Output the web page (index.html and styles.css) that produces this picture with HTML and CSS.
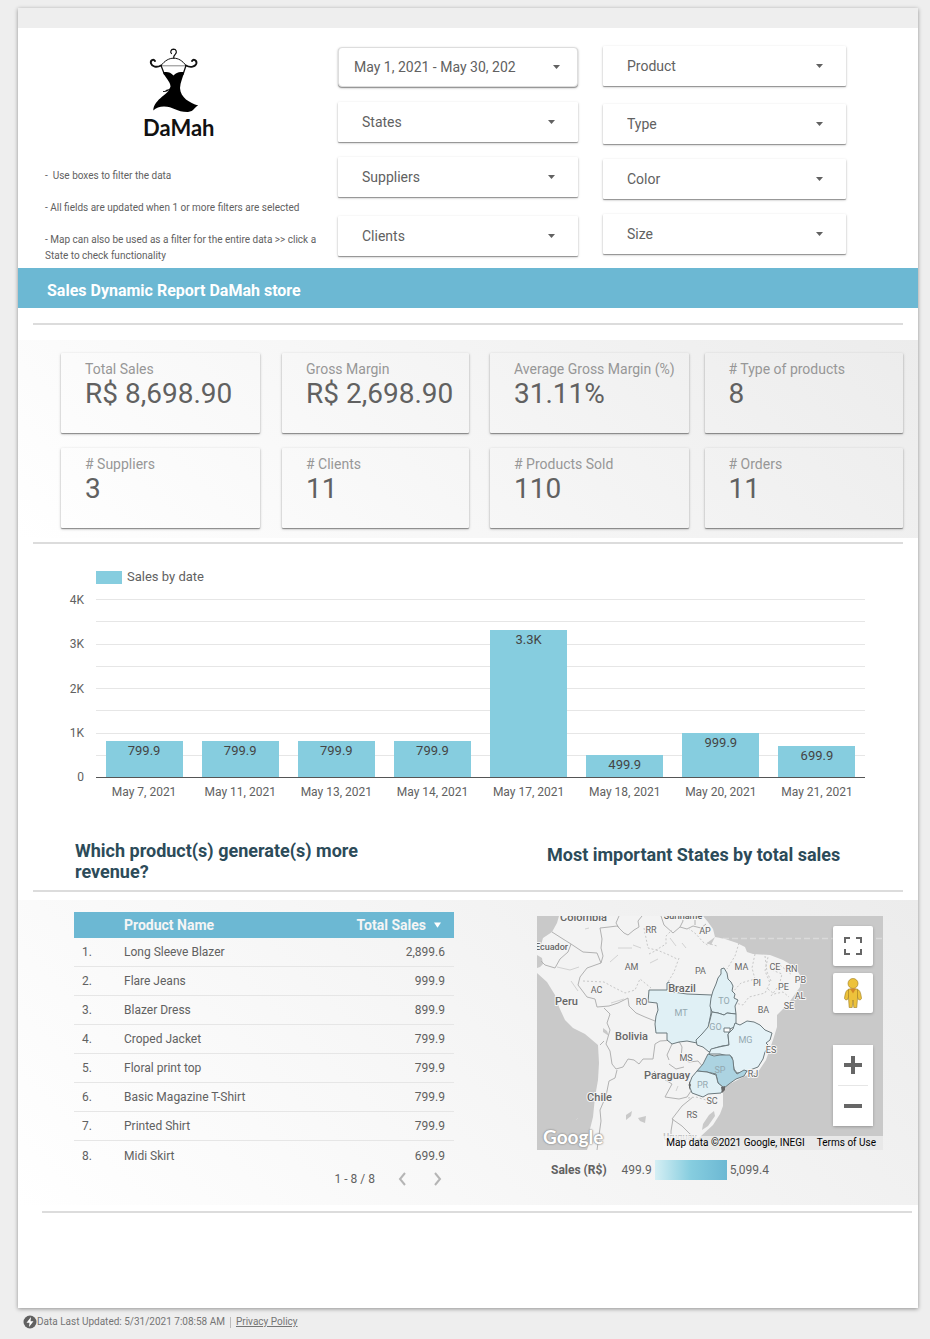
FILE: index.html
```html
<!DOCTYPE html>
<html lang="en">
<head>
<meta charset="utf-8">
<meta name="viewport" content="width=device-width, initial-scale=1">
<title>Sales Dynamic Report DaMah store</title>
<link rel="stylesheet" href="styles.css">
</head>
<body>
<main class="sheet">
  <div class="sheet-strip"></div>

  <header class="top">
    <div class="intro">
      <svg class="logo" viewBox="0 0 80 96" role="img" aria-label="DaMah">
        <g fill="none" stroke="#111" stroke-linecap="round">
          <path stroke-width="1.2" d="M32.500 5.500c-1.500-1-.8-4.200 2-4.300 2.800 0 3.800 3 1.800 5-1.400 1.300-1.800 2-1.600 4"/>
          <path stroke-width="1" d="M22 17.500c4-5 8-7.300 12.700-7.300 4.600 0 8.600 2.300 12.300 7.300"/>
          <path stroke-width="1.900" d="M16 13c-1.500-2.500-5-.8-4 2.500 1 3.200 5.500 4.500 10 2"/>
          <path stroke-width="1.900" d="M53 13c1.500-2.500 5-.8 4.400 2.500-1 3.200-5.800 4.500-10.400 2"/>
          <path stroke-width=".5" d="M22 17.800h25"/>
          <path stroke-width="1.300" d="M22 17.500l3.500 9M47 17.500l-3 9"/>
          <path stroke-width="1.100" d="M32 39.500c-2 3-4 4-7.500 4M32 41l-5 1.500"/>
        </g>
        <path fill="#000" d="M24 24.500c4-1.200 7.500-.2 10.500 3 2.800-3.200 6-4.300 10.500-3.200-.8 4.500-3.800 10-4 15.700.5 9.500 9.500 15 18.300 17.500-3.200.8-4.300 6-10.300 6.500-11 .2-15-5.500-24-5.500-4.500 0-8 1.500-10.700 4 .5-12 17-16.500 17.200-24 0-4.500-5-9-7.500-14z"/>
        <text class="logo-name" x="4" y="88">DaMah</text>
      </svg>
      <div class="notes">
        <p>-&nbsp; Use boxes to filter the data</p>
        <p>- All fields are updated when 1 or more filters are selected</p>
        <p>- Map can also be used as a filter for the entire data &gt;&gt; click a State to check functionality</p>
      </div>
    </div>

    <div class="filters filters-main">
      <div class="filter-group">
        <button type="button" class="control date-range"><span>May 1, 2021 - May 30, 202</span></button>
        <select class="control" aria-label="States"><option>States</option></select>
        <select class="control" aria-label="Suppliers"><option>Suppliers</option></select>
      </div>
      <div class="filter-group">
        <select class="control" aria-label="Clients"><option>Clients</option></select>
      </div>
    </div>
    <div class="filters filters-product">
      <div class="filter-group">
        <select class="control" aria-label="Product"><option>Product</option></select>
      </div>
      <div class="filter-group">
        <select class="control" aria-label="Type"><option>Type</option></select>
        <select class="control" aria-label="Color"><option>Color</option></select>
        <select class="control" aria-label="Size"><option>Size</option></select>
      </div>
    </div>
  </header>

  <h1 class="banner">Sales Dynamic Report DaMah store</h1>
  <hr class="rule">

  <section class="band kpis" aria-label="Key figures">
    <div class="kpi-block kpi-block-left">
      <div class="kpi"><span class="kpi-label">Total Sales</span><span class="kpi-value">R$ 8,698.90</span></div>
      <div class="kpi"><span class="kpi-label">Gross Margin</span><span class="kpi-value">R$ 2,698.90</span></div>
      <div class="kpi"><span class="kpi-label"># Suppliers</span><span class="kpi-value">3</span></div>
      <div class="kpi"><span class="kpi-label"># Clients</span><span class="kpi-value">11</span></div>
    </div>
    <div class="kpi-block kpi-block-right">
      <div class="kpi"><span class="kpi-label">Average Gross Margin (%)</span><span class="kpi-value">31.11%</span></div>
      <div class="kpi"><span class="kpi-label"># Type of products</span><span class="kpi-value">8</span></div>
      <div class="kpi"><span class="kpi-label"># Products Sold</span><span class="kpi-value">110</span></div>
      <div class="kpi"><span class="kpi-label"># Orders</span><span class="kpi-value">11</span></div>
    </div>
  </section>
  <hr class="rule rule-tight">

  <section class="chart" aria-label="Sales by date">
    <div class="legend"><span class="swatch"></span>Sales by date</div>
    <div class="y-axis"><span>4K</span><span>3K</span><span>2K</span><span>1K</span><span>0</span></div>
    <div class="plot">
      <div class="grid-lines"><i></i><i></i><i></i><i></i><i></i><i></i><i></i><i></i><i></i></div>
      <div class="bars">
        <div class="bar" style="height:20%">799.9</div>
        <div class="bar" style="height:20%">799.9</div>
        <div class="bar" style="height:20%">799.9</div>
        <div class="bar" style="height:20%">799.9</div>
        <div class="bar" style="height:82.5%">3.3K</div>
        <div class="bar" style="height:12.5%">499.9</div>
        <div class="bar" style="height:25%">999.9</div>
        <div class="bar" style="height:17.5%">699.9</div>
      </div>
    </div>
    <div class="x-axis"><span>May 7, 2021</span><span>May 11, 2021</span><span>May 13, 2021</span><span>May 14, 2021</span><span>May 17, 2021</span><span>May 18, 2021</span><span>May 20, 2021</span><span>May 21, 2021</span></div>
  </section>

  <div class="headings">
    <h2>Which product(s) generate(s) more revenue?</h2>
    <h2 class="heading-states">Most important States by total sales</h2>
  </div>
  <hr class="rule rule-flush">

  <section class="band details">
    <div class="products">
      <table class="table">
        <thead>
          <tr><th class="col-index"></th><th>Product Name</th><th class="num">Total Sales<svg class="sort" viewBox="0 0 8 6" aria-hidden="true"><path d="M0 0h8L4 6z"/></svg></th></tr>
        </thead>
        <tbody>
          <tr><td>1.</td><td>Long Sleeve Blazer</td><td class="num">2,899.6</td></tr>
          <tr><td>2.</td><td>Flare Jeans</td><td class="num">999.9</td></tr>
          <tr><td>3.</td><td>Blazer Dress</td><td class="num">899.9</td></tr>
          <tr><td>4.</td><td>Croped Jacket</td><td class="num">799.9</td></tr>
          <tr><td>5.</td><td>Floral print top</td><td class="num">799.9</td></tr>
          <tr><td>6.</td><td>Basic Magazine T-Shirt</td><td class="num">799.9</td></tr>
          <tr><td>7.</td><td>Printed Shirt</td><td class="num">799.9</td></tr>
          <tr><td>8.</td><td>Midi Skirt</td><td class="num">699.9</td></tr>
        </tbody>
      </table>
      <div class="pager">
        <span>1 - 8 / 8</span>
        <button type="button" aria-label="Previous page"><svg viewBox="0 0 8 14"><path d="M7 1L2 7l5 6"/></svg></button>
        <button type="button" aria-label="Next page"><svg viewBox="0 0 8 14"><path d="M1 1l5 6-5 6"/></svg></button>
      </div>
    </div>

    <div class="states">
      <div class="map">
        <svg class="map-art" viewBox="0 0 346 234" preserveAspectRatio="xMidYMid slice" role="img" aria-label="Total sales by Brazilian state">
          <rect width="346" height="234" fill="#c9c9c9"/>
          <path d="M150 22.500H346" stroke="#dadada" stroke-width="1.500" stroke-dasharray="6 3" fill="none"/>
          <path fill="#f3f3f3" d="M22 0L20 7L15 16L6 22L4 29L0 33V39L5 42L6 48L3 51L0 52V57L10 66L18 79L22 91L28 104L36 112L48 118L61 129L62 147L61 164L58 181L56 201L53 213L54 221L50 234H152L163 221L176 209L183 198L186 190V174L189 170L208 160L221 156L229 144L236 124L240 111V99L250 89L256 81L263 71V59L258 51L246 44L233 39L216 38L210 36L208 31L200 27L188 23L178 21L176 13L171 6L166 0z"/>
          <path fill="#c9c9c9" d="M172 199l5-4 1 5-7 10-6 4 1-6zM66 112l4 3 2 5-6-4zM89 199l6-4-1 5-5 4zM101 202l8-2-1 7-5-2zM170 27l8-6-4 8z"/>
          <g class="borders">
            <path d="M15 16l11 7 8 5 12 8 14 1 4 10-14 5-7 9-2 8 9 12 8 2 2 8 12-1 9-3 10-5 1 8 7 7 9 4 10 4"/>
            <path d="M64 47l2-7-2-8 1-9-2-11 9-1 8-1 7 7 4 2 6-5 5-3-1-6 4-5M82 12l-3-5 3-7M34 28l-3 8-8 7-5 9-10-3-4-4"/>
            <path d="M124 0l3 9 9 8 7-6 7 2 6-3 8 2 5-4M145 0l1 5-3 6M158 0v9"/>
            <path d="M67 92l6 6-3 9 3 7-4 14 4 7 2 13 4 5 7-2 5-8 6 1 5 4 4-5h10l2-15 5-3 15-1 5 3 2 4-1 11 8 4 9-1 6 7"/>
            <path d="M132 144l-2-5 5-11M132 148l7 5 8-2M117 155l5 5 13 8-7 13 14 2 8-2 6-9M80 154l-2 8-6 3-3 15-6 14 1 11-4 29M135 203l10-13 11-9M135 203l10 7 8 8 10 7M136 203l-2 12v12M63 129l4-4"/>
            <path class="soft" d="M20 51l13 3 9-3M34 65l7 10M52 12l-4 1M73 46l8-7M81 32h14M96 29l8 3M113 47l8-4M133 22l6 8M145 27l4 5M74 87l13-4M39 204l2-2M141 170l-2 5M162 180l2-5"/>
          </g>
          <g class="borders dashed">
            <path d="M46 65l21 1 9 5 12 6 10-3 5-11 11 9M107 12l4 20 8 2 10-6v-8l6-6M112 38l8-4 12 5 8 4M142 42l-5 14-6 10M151 12l8 6 7 8 6 4M202 27l-4 13-8 13M218 38l-3 14 3 11-14 4-10 11 4 9 8 2 6-8 16-4 5-10-5-12 3-14M228 40l2 16 4 9M234 80l6-8 12-6M235 54l10 4-2 8M243 49l12 10M231 73l6 5 9-2 6 5M170 27l10 3"/>
            <path d="M151 182l8-1 10 3M171 187l8-2"/>
          </g>
          <g class="regions">
            <path fill="#e0f0f5" d="M112 74H130V67L132 66L133 70L136 76L150 78L175 79L174 88V97L172 107L173 113L167 118L160 127L150 125L142 126L135 128L130 124V117H119L118 108L119 100L121 94L120 87L111 86z"/>
            <path fill="#e0f0f5" d="M184 53L187 52L190 57L191 63L194 66L196 70L195 75L198 78L197 82L201 84L198 90L199 98L190 97L187 99L181 97L175 96L173 90L174 82L176 75L179 68L181 62L184 58z"/>
            <path fill="#e0f0f5" d="M175 96L181 97L187 99L190 97L199 98V110L193 113L191 119L192 129L185 130L178 132L172 136L166 131L160 129L159 124L165 118L171 111L173 104z"/>
            <path fill="#e4f2f7" d="M198 107L203 109L210 105L217 106L223 109L228 114L235 117L233 124L229 127L232 130L228 136L226 143L221 151L213 154L208 156L200 157L197 153L195 141L183 138L172 138L174 133L182 131L192 129L191 118L196 113z"/>
            <path fill="#acd3e1" d="M171 138L177 140L183 139L193 139L196 144L197 154L200 158L207 154L210 155L207 160L199 163L192 168L187 172L181 167L179 158L170 156L160 155L166 148z"/>
            <path fill="#e0f0f5" d="M160 155L170 156L179 159L181 167L187 172L184 177L171 178L166 181L155 177L152 169L155 161z"/>
            <path fill="#fff" d="M187 112h6v4h-6z"/>
            <path fill="#666" stroke="none" d="M184 171l4-1v4l-3 3zM152 165l2 4-2 5z"/>
          </g>
          <g class="places">
            <text x="46.500" y="4.500">Colombia</text><text x="146" y="3" class="small">Suriname</text><text x="14.500" y="34" class="small">Ecuador</text>
            <text x="29.500" y="88.500">Peru</text><text x="145" y="75.500">Brazil</text><text x="94.500" y="123.500">Bolivia</text>
            <text x="130" y="163">Paraguay</text><text x="62.500" y="185">Chile</text><text x="89" y="243">Argentina</text>
            <text x="143" y="224" class="small faded">Uruguay</text>
          </g>
          <g class="codes">
            <text x="114" y="17">RR</text><text x="168" y="18">AP</text><text x="94.500" y="54">AM</text><text x="163.500" y="58">PA</text>
            <text x="59.500" y="77">AC</text><text x="104.500" y="89">RO</text><text x="204.500" y="54">MA</text><text x="238" y="54">CE</text>
            <text x="254.500" y="56">RN</text><text x="263.500" y="67">PB</text><text x="220" y="70">PI</text><text x="246.500" y="74">PE</text>
            <text x="263" y="83">AL</text><text x="252" y="93">SE</text><text x="226.500" y="97">BA</text><text x="149" y="145">MS</text>
            <text x="234" y="137">ES</text><text x="216" y="161">RJ</text><text x="175" y="188">SC</text><text x="155" y="202">RS</text>
          </g>
          <g class="codes on-region">
            <text x="144" y="100">MT</text><text x="187" y="88">TO</text><text x="178.500" y="114">GO</text><text x="208.500" y="127">MG</text>
            <text x="183" y="157">SP</text><text x="165.500" y="172">PR</text>
          </g>
        </svg>
        <span class="google">Google</span>
        <div class="map-buttons">
          <button type="button" class="map-button" aria-label="Toggle fullscreen"><svg viewBox="0 0 18 18"><path fill="none" stroke="#666" stroke-width="2" d="M1 6V1h5M12 1h5v5M17 12v5h-5M6 17H1v-5"/></svg></button>
          <button type="button" class="map-button pegman" aria-label="Street View"><svg viewBox="0 0 18 30"><g fill="#edc23b" stroke="#9b7b22" stroke-width=".6"><path d="M3.500 12c-1.500.5-2.500 4-3 8.500.6 1.500 2 1.800 3.200.8l1.800-5.300v-4zM14.500 12c1.500.5 2.500 4 3 8.500-.6 1.500-2 1.800-3.200.8L12.500 16v-4z"/><path d="M4.500 11h9v9l-.7 9.500h-3L9 22l-.8 7.500h-3L4.500 20z"/><circle cx="9" cy="5.500" r="5"/></g><path fill="#d48828" d="M6 10.500l3 5 3-5z"/></svg></button>
          <div class="zoom"><button type="button" aria-label="Zoom in"><svg viewBox="0 0 18 18"><path d="M7 0h4v7h7v4h-7v7H7v-7H0V7h7z"/></svg></button><button type="button" aria-label="Zoom out"><svg viewBox="0 0 18 18"><path d="M0 7h18v4H0z"/></svg></button></div>
        </div>
        <div class="attribution"><span>Map data ©2021 Google, INEGI</span><a href="#terms">Terms of Use</a></div>
      </div>
      <div class="scale"><strong>Sales (R$)</strong><span>499.9</span><span class="ramp"></span><span>5,099.4</span></div>
    </div>
  </section>
  <hr class="rule rule-last">
</main>
<footer class="footer">
  <svg class="bolt" viewBox="0 0 14 14" aria-hidden="true"><circle cx="7" cy="7" r="6.500" fill="#616161"/><path fill="#fff" d="M8 2L3.500 7.800h3L6 12l4.500-5.800h-3z"/></svg>
  <span>Data Last Updated: 5/31/2021 7:08:58 AM</span>
  <span class="divider"></span>
  <a href="#privacy">Privacy Policy</a>
</footer>
</body>
</html>
```
FILE: styles.css
```css
* { box-sizing: border-box; }
body { margin: 0; padding: 8px 12px 0 18px; background: #eee; color: #616161; font: 12px/16px Roboto, sans-serif; }
button, select { font: inherit; color: inherit; border: 0; margin: 0; }
h1, h2, p { margin: 0; }

.sheet { background: #fff; padding-bottom: 95px; box-shadow: 0 1px 4px rgba(0, 0, 0, .4); }
.sheet-strip { height: 20px; background: #eee; }

/* Header */
.top { display: grid; grid-template-columns: 293fr 240fr 268fr; padding: 18px 72px 4px 27px; }
.intro { padding-right: 18px; }
.logo { display: block; width: 80px; height: 96px; margin: 2px 0 24px 94px; }
.logo-name { font: 700 22px Lato, sans-serif; fill: #111; }
.notes { font-size: 10px; line-height: 16px; }
.notes p + p { margin-top: 16px; }
.filters { display: flex; flex-direction: column; }
.filters-main { gap: 19px; padding-top: 1px; }
.filters-product { gap: 18px; padding-left: 25px; }
.filter-group { display: flex; flex-direction: column; gap: 15px; }
.control {
  appearance: none; width: 100%; height: 40px; padding: 0 24px; text-align: left; font-size: 14px; border-radius: 1px;
  background: #fff url("data:image/svg+xml,%3Csvg xmlns='http://www.w3.org/2000/svg' viewBox='0 0 7 4'%3E%3Cpath d='M0 0h7L3.500 4z' fill='%23616161'/%3E%3C/svg%3E") no-repeat right 23px center / 7px 4px;
  box-shadow: 0 1px 1px rgba(0, 0, 0, .35), 0 1px 3px rgba(0, 0, 0, .2);
}
.date-range { padding: 0 15px; border-radius: 4px; border: 1px solid #ddd; background-position: right 17px center; }

/* Title and rules */
.banner { height: 40px; padding: 3px 29px 0; background: #6cb8d3; color: #fff; font-size: 16px; font-weight: 700; line-height: 40px; }
.rule { height: 2px; margin: 15px 15px; border: 0; background: #dcdcdc; }
.rule-tight { margin: 4px 15px 26px; }
.rule-flush { margin: 8px 15px; }
.rule-last { margin: 6px 6px 0 24px; }

/* Key figures */
.band { background: linear-gradient(45deg, #fff, #ececec); }
.kpis { display: flex; gap: 21px; padding: 13px 15px 10px 43px; }
.kpi-block { display: grid; row-gap: 15px; }
.kpi-block-left { flex: 408; grid-template-columns: 199fr 187fr; column-gap: 22px; }
.kpi-block-right { flex: 413; grid-template-columns: 1fr 1fr; column-gap: 16px; }
.kpi { height: 80px; padding: 8px 0 0 24px; border-radius: 1px; white-space: nowrap; box-shadow: 0 1px 1px rgba(0, 0, 0, .35), 0 1px 3px rgba(0, 0, 0, .25); }
.kpi span { display: block; }
.kpi-label { font-size: 14px; line-height: 16px; color: #979797; }
.kpi-value { font-size: 28px; line-height: 34px; }

/* Chart */
.chart { display: grid; grid-template-columns: 26px 1fr; grid-template-rows: 14px 179px auto; column-gap: 12px; row-gap: 15px; padding: 0 53px 0 40px; }
.legend { grid-column: 2; display: flex; align-items: center; gap: 5px; font-size: 13px; }
.swatch { width: 26px; height: 13px; background: #86cddf; }
.y-axis { display: flex; flex-direction: column; justify-content: space-between; margin: -7px 0; text-align: right; }
.plot { position: relative; }
.grid-lines { position: absolute; inset: 0; display: flex; flex-direction: column; justify-content: space-between; }
.grid-lines i { height: 1px; background: #e6e6e6; }
.bars { position: relative; display: grid; grid-template-columns: repeat(8, 1fr); align-items: end; height: 100%; border-bottom: 1px solid #555; }
.bar { width: 80%; margin: 0 auto; padding-top: 2px; background: #86cddf; color: #444; font-size: 13px; text-align: center; }
.x-axis { grid-column: 2; display: grid; grid-template-columns: repeat(8, 1fr); margin-top: -9px; text-align: center; }

/* Section headings */
.headings { display: grid; grid-template-columns: 472fr 371fr; align-items: start; padding: 40px 0 0 57px; color: #2c4b59; }
.headings h2 { max-width: 330px; font-size: 18px; line-height: 21px; }
.headings .heading-states { padding-top: 4px; }

/* Product table */
.details { display: grid; grid-template-columns: 380fr 346fr; column-gap: 83px; padding: 12px 35px 16px 56px; min-height: 305px; }
.table { width: 100%; border-spacing: 0; }
.table th { height: 26px; padding: 0; background: #6cb8d3; color: #f5f5f5; font-size: 14px; text-align: left; }
.table td { height: 29px; padding: 0; border-bottom: 1px solid #e6e6e6; }
.table tr:last-child td { border-bottom: 0; }
.table .col-index { width: 50px; }
.table td:first-child { padding-left: 8px; }
.table .num { text-align: right; padding-right: 9px; }
.table th.num { padding-right: 13px; }
.sort { width: 7px; height: 6px; margin-left: 8px; fill: #fff; vertical-align: 2px; }
.pager { display: flex; justify-content: flex-end; align-items: center; gap: 23px; margin-top: 1px; padding-right: 12px; }
.pager button { display: flex; padding: 0; background: none; }
.pager svg { width: 8px; height: 14px; fill: none; stroke: #b5b5b5; stroke-width: 2; }
.pager button + button { margin-left: 5px; }

/* Map */
.states { padding-top: 4px; }
.map { position: relative; height: 234px; overflow: hidden; }
.map-art { display: block; width: 100%; height: 100%; }
.borders { fill: none; stroke: #b2b2b2; stroke-width: 1; stroke-linejoin: round; }
.borders .soft { stroke: #d2d2d2; }
.dashed { stroke: #c8c8c8; stroke-dasharray: 2 2; }
.regions { stroke: #6d7a7e; stroke-width: 1; stroke-linejoin: round; }
.places, .codes { text-anchor: middle; fill: #666; stroke: #f5f5f5; stroke-width: 2px; paint-order: stroke; stroke-linejoin: round; }
.places { font-size: 11px; font-weight: 500; }
.places .small { font-size: 9px; }
.places .faded { fill: #bbb; }
.codes { font-size: 9px; }
.on-region { fill: #93a8b0; stroke: none; }
.google { position: absolute; left: 6px; bottom: 3px; color: #fff; font: 700 19px/20px Lato, sans-serif; text-shadow: 0 0 2px #999, 0 0 2px #999, 0 0 1px #888; }
.map-buttons { position: absolute; top: 10px; right: 10px; bottom: 24px; width: 40px; display: flex; flex-direction: column; gap: 7px; }
.map-buttons button { display: flex; align-items: center; justify-content: center; width: 40px; height: 40px; padding: 0; background: #fff; }
.map-buttons svg { width: 18px; height: 18px; fill: #666; }
.map-buttons .map-button, .zoom { border-radius: 2px; box-shadow: 0 1px 3px rgba(0, 0, 0, .25); }
.map-buttons .pegman svg { height: 30px; }
.zoom { display: flex; flex-direction: column; align-items: center; margin-top: auto; background: #fff; }
.zoom::before { content: ""; order: 1; width: 30px; height: 1px; background: #e6e6e6; }
.zoom button + button { order: 2; }
.attribution { position: absolute; right: 0; bottom: 0; display: flex; gap: 12px; padding: 0 7px 0 3px; background: rgba(245, 245, 245, .7); color: #000; font-size: 10px; line-height: 14px; }
.attribution a { color: inherit; text-decoration: none; }
.scale { display: flex; align-items: center; padding: 10px 0 0 14px; line-height: 20px; }
.scale strong { margin-right: 15px; }
.ramp { width: 72px; height: 20px; margin: 0 3px; background: linear-gradient(90deg, #d5eff4, #86cddf 50%, #6cb8d3); }

/* Footer */
.footer { display: flex; align-items: center; padding: 6px 5px 8px; color: #757575; font-size: 10px; }
.bolt { width: 14px; height: 14px; }
.divider { width: 1px; height: 11px; margin: 0 5px; background: #bbb; }
.footer a { color: inherit; }
```
